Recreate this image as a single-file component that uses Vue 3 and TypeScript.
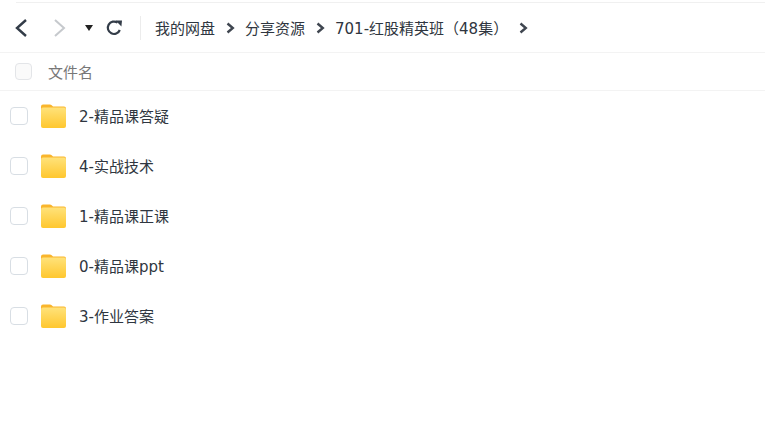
<script setup lang="ts">
const crumbs = ['我的网盘', '分享资源', '701-红股精英班（48集）']
const files = ['2-精品课答疑', '4-实战技术', '1-精品课正课', '0-精品课ppt', '3-作业答案']
</script>

<template>
  <div class="page">
    <div class="top-line"></div>
    <div class="toolbar">
      <svg class="nav back" width="16" height="22" viewBox="0 0 16 22">
        <path d="M13 3 L4 11 L13 19" fill="none" stroke="#333c48" stroke-width="2.4" />
      </svg>
      <svg class="nav forward" width="16" height="22" viewBox="0 0 16 22">
        <path d="M3 3 L12 11 L3 19" fill="none" stroke="#c6c9cd" stroke-width="2" />
      </svg>
      <svg class="caret" width="8" height="6" viewBox="0 0 8 6">
        <path d="M0 0 H8 L4 6 Z" fill="#222" />
      </svg>
      <svg class="refresh" width="17" height="17" viewBox="0 0 17 17">
        <path d="M13.8 11 A6.2 6.2 0 1 1 11.6 3.7" fill="none" stroke="#333c48" stroke-width="2.2" />
        <path d="M9.6 1.6 L16 1.6 L15.4 7.6 Z" fill="#333c48" />
      </svg>
      <div class="divider"></div>
      <div class="crumbs">
        <template v-for="c in crumbs" :key="c">
          <span class="crumb">{{ c }}</span>
          <svg class="chev" width="9" height="12" viewBox="0 0 9 12">
            <path d="M1.5 1.5 L6.8 6 L1.5 10.5" fill="none" stroke="#3f4650" stroke-width="2.4" />
          </svg>
        </template>
      </div>
    </div>
    <div class="head">
      <span class="check head-check"></span>
      <span class="head-name">文件名</span>
    </div>
    <div class="row" v-for="f in files" :key="f">
      <span class="check"></span>
      <svg class="folder" width="25" height="24" viewBox="0 0 25 24">
        <defs>
          <linearGradient id="folderFill" x1="0" y1="0" x2="0" y2="1">
            <stop offset="0" stop-color="#ffe27a" />
            <stop offset="1" stop-color="#ffc72e" />
          </linearGradient>
        </defs>
        <path d="M0 2.5 Q0 .5 2 .5 H9 Q10.5 .5 11.5 2 L12 2.5 H23 Q25 2.5 25 4.5 V10 H0 Z" fill="#f9b52c" />
        <rect x="0" y="3.5" width="25" height="20.5" rx="2" fill="url(#folderFill)" />
      </svg>
      <span class="name">{{ f }}</span>
    </div>
  </div>
</template>

<style scoped>
.page {
  width: 765px;
  height: 448px;
  background: #fff;
  font-family: "DejaVu Sans", "Noto Sans CJK SC", sans-serif;
  color: #2f3640;
  overflow: hidden;
}

.top-line {
  height: 1px;
  margin: 2px 0 0 16px;
  background: #f0f0f0;
}

.toolbar {
  height: 49px;
  display: flex;
  align-items: center;
  border-bottom: 1px solid #f3f3f3;
}

.back {
  margin-left: 13px;
}

.forward {
  margin-left: 23px;
}

.caret {
  margin-left: 17px;
}

.refresh {
  margin-left: 13px;
}

.divider {
  width: 1px;
  height: 24px;
  margin-left: 17px;
  background: #ececec;
}

.crumbs {
  display: flex;
  align-items: center;
  margin-left: 14px;
  font-size: 15px;
}

.crumb {
  padding-bottom: 1px;
}

.chev {
  margin: 0 10.5px;
}

.head {
  height: 37px;
  display: flex;
  align-items: center;
  border-bottom: 1px solid #f3f3f3;
  font-size: 15px;
  color: #777;
}

.check {
  width: 18px;
  height: 18px;
  flex: none;
  box-sizing: border-box;
  border: 1.5px solid #d8dee4;
  border-radius: 4px;
  background: #fff;
}

.head-check {
  width: 17px;
  height: 17px;
  margin-left: 15px;
  border-color: #e3e5e8;
  background: #fafafa;
}

.head-name {
  margin-left: 16px;
}

.row {
  height: 50px;
  display: flex;
  align-items: center;
  padding-left: 10px;
  font-size: 15px;
}

.folder {
  margin-left: 13px;
}

.name {
  margin-left: 13px;
  padding-bottom: 2px;
}
</style>
